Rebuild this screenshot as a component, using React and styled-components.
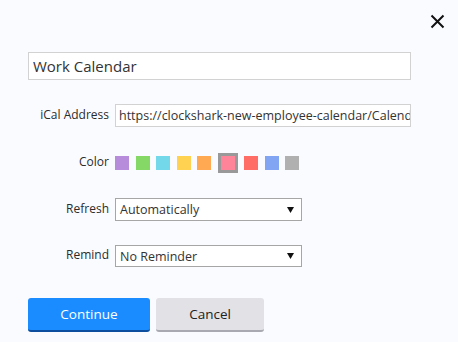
import React, { useState } from "react";
import styled, { createGlobalStyle } from "styled-components";

const GlobalStyle = createGlobalStyle`
  html, body {
    margin: 0;
    padding: 0;
    background: #fafbff;
  }
  body {
    font-family: "Open Sans", "Noto Sans", sans-serif;
    color: #2b2b2b;
  }
`;

const Page = styled.div`
  width: 458px;
  height: 342px;
  background: #fafbff;
  box-sizing: border-box;
  padding: 0 0 0 28px;
`;

const Header = styled.div`
  height: 52px;
  display: flex;
  justify-content: flex-end;
  align-items: flex-start;
  padding: 14px 13px 0 0;
  box-sizing: border-box;
`;

const CloseButton = styled.button`
  width: 15px;
  height: 15px;
  padding: 0;
  border: none;
  background: none;
  cursor: pointer;
  display: flex;
`;

const NameInput = styled.input`
  width: 383px;
  height: 28px;
  box-sizing: border-box;
  border: 1px solid #d2d2d2;
  background: #fff;
  padding: 0 0 0 4px;
  font-family: inherit;
  font-size: 15px;
  color: #333;
  outline: none;
`;

const Row = styled.div`
  display: flex;
  align-items: center;
  margin-top: ${(p) => p.$top}px;
  height: ${(p) => p.$height}px;
`;

const Label = styled.label`
  width: 81px;
  margin-right: 6px;
  margin-top: -3px;
  text-align: right;
  font-size: 12px;
  color: #2b2b2b;
  white-space: nowrap;
`;

const TextField = styled.input`
  width: 296px;
  height: 23px;
  box-sizing: border-box;
  border: 1px solid #d2d2d2;
  background: #fff;
  padding: 0 0 0 3px;
  font-family: inherit;
  font-size: 12.5px;
  color: #333;
  outline: none;
`;

const Swatches = styled.div`
  display: flex;
  align-items: center;
  gap: 6.5px;
`;

const Swatch = styled.button`
  width: ${(p) => (p.$selected ? 20 : 14)}px;
  height: ${(p) => (p.$selected ? 20 : 14)}px;
  box-sizing: border-box;
  padding: 0;
  background: ${(p) => p.$color};
  border: ${(p) => (p.$selected ? "3px solid #999" : "none")};
  cursor: pointer;
`;

const Select = styled.div`
  width: 187px;
  height: ${(p) => p.$height}px;
  box-sizing: border-box;
  border: 1px solid #a6a6a6;
  background: #fff;
  display: flex;
  align-items: center;
  justify-content: space-between;
  padding: 0 7px 0 4px;
  font-size: 12.5px;
  color: #333;
  cursor: pointer;
`;

const Actions = styled.div`
  display: flex;
  gap: 6px;
  margin-top: 31px;
`;

const Button = styled.button`
  width: ${(p) => p.$width}px;
  height: 34px;
  box-sizing: border-box;
  border: none;
  border-radius: 3px;
  border-bottom: 2px solid ${(p) => (p.$primary ? "#0d4f9e" : "#a9a9b1")};
  background: ${(p) => (p.$primary ? "#1a8cff" : "#e2e1e5")};
  color: ${(p) => (p.$primary ? "#fff" : "#222")};
  font-family: inherit;
  font-size: 13.5px;
  padding: 0;
  cursor: pointer;
`;

const COLORS = [
  "#b78ddb",
  "#86d866",
  "#73d9ea",
  "#ffd351",
  "#ffa953",
  "#ff849a",
  "#ff6d66",
  "#81a4f3",
  "#b0b0b0",
];

const Caret = () => (
  <svg width="7" height="6" viewBox="0 0 7 6">
    <path d="M0 0 H7 L3.5 6 Z" fill="#111" />
  </svg>
);

const App = () => {
  const [selected, setSelected] = useState(5);

  return (
    <Page>
      <GlobalStyle />
      <Header>
        <CloseButton aria-label="Close">
          <svg width="15" height="15" viewBox="0 0 15 15">
            <path d="M1.5 1.5 L13.5 13.5 M13.5 1.5 L1.5 13.5" stroke="#111" strokeWidth="2" />
          </svg>
        </CloseButton>
      </Header>

      <NameInput defaultValue="Work Calendar" />

      <Row $top={24} $height={23}>
        <Label>iCal Address</Label>
        <TextField defaultValue="https://clockshark-new-employee-calendar/Calendar.ics" />
      </Row>

      <Row $top={26} $height={20}>
        <Label>Color</Label>
        <Swatches>
          {COLORS.map((c, i) => (
            <Swatch
              key={c}
              $color={c}
              $selected={i === selected}
              onClick={() => setSelected(i)}
            />
          ))}
        </Swatches>
      </Row>

      <Row $top={25} $height={23}>
        <Label>Refresh</Label>
        <Select $height={23}>
          Automatically
          <Caret />
        </Select>
      </Row>

      <Row $top={24} $height={22}>
        <Label>Remind</Label>
        <Select $height={22}>
          No Reminder
          <Caret />
        </Select>
      </Row>

      <Actions>
        <Button $primary $width={122}>Continue</Button>
        <Button $width={108}>Cancel</Button>
      </Actions>
    </Page>
  );
};

export default App;
